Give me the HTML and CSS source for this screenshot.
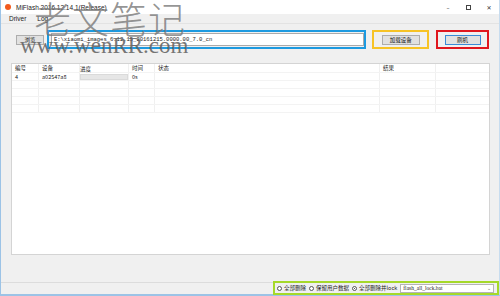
FILE: index.html
```html
<!DOCTYPE html>
<html>
<head>
<meta charset="utf-8">
<link rel="stylesheet" href="styles.css">
</head>
<body>
<div class="window">
  <div class="titlebar">
    <span class="appicon"></span>
    <span class="title">MiFlash 2016.12.14.1(Release)</span>
    <span class="controls">
      <span class="ctl">&#8211;</span>
      <span class="ctl box"></span>
      <span class="ctl">&#10005;</span>
    </span>
  </div>
  <div class="menubar">
    <span class="menu">Driver</span>
    <span class="menu">Log</span>
  </div>
  <div class="main">
    <div class="toolbar">
      <button class="btn browse">浏览</button>
      <div class="mark mark-blue">
        <div class="path">E:\xiaomi_images_6.12.15_20161215.0000.00_7.0_cn</div>
      </div>
      <div class="mark mark-yellow">
        <button class="btn load">加载设备</button>
      </div>
      <div class="mark mark-red">
        <button class="btn flash">刷机</button>
      </div>
    </div>
    <div class="table">
      <div class="row head">
        <span class="c c1">编号</span><span class="c c2">设备</span><span class="c c3">进度</span><span class="c c4">时间</span><span class="c c5">状态</span><span class="c c6">结果</span><span class="c c7"></span>
      </div>
      <div class="row">
        <span class="c c1">4</span><span class="c c2">a02547a8</span><span class="c c3"><span class="prog"></span></span><span class="c c4">0s</span><span class="c c5"></span><span class="c c6"></span><span class="c c7"></span>
      </div>
      <div class="row empty"><span class="c c1"></span><span class="c c2"></span><span class="c c3"></span><span class="c c4"></span><span class="c c5"></span><span class="c c6"></span><span class="c c7"></span></div>
      <div class="row empty"><span class="c c1"></span><span class="c c2"></span><span class="c c3"></span><span class="c c4"></span><span class="c c5"></span><span class="c c6"></span><span class="c c7"></span></div>
      <div class="row empty"><span class="c c1"></span><span class="c c2"></span><span class="c c3"></span><span class="c c4"></span><span class="c c5"></span><span class="c c6"></span><span class="c c7"></span></div>
      <div class="row empty"><span class="c c1"></span><span class="c c2"></span><span class="c c3"></span><span class="c c4"></span><span class="c c5"></span><span class="c c6"></span><span class="c c7"></span></div>
      <div class="filler"></div>
    </div>
  </div>
  <div class="statusbar">
    <div class="mark mark-green">
      <span class="radio"></span><span class="lbl">全部删除</span>
      <span class="radio"></span><span class="lbl">保留用户数据</span>
      <span class="radio on"></span><span class="lbl">全部删除并lock</span>
      <div class="select"><span>flash_all_lock.bat</span><span class="arrow">&#8964;</span></div>
    </div>
  </div>
  <div class="watermark">
    <div class="wm-cn">老文笔记</div>
    <div class="wm-en">www.wenRR.com</div>
  </div>
</div>
</body>
</html>
```

FILE: styles.css
```css
* { box-sizing: border-box; }
html, body { margin: 0; padding: 0; }
body {
  width: 500px;
  height: 296px;
  overflow: hidden;
  background: #f0f0f0;
  font-family: "Noto Sans CJK SC", "Liberation Sans", sans-serif;
  font-size: 6px;
  color: #222;
}
.window {
  position: relative;
  width: 500px;
  height: 296px;
  display: flex;
  flex-direction: column;
  border-left: 1px solid #9cc3e6;
  border-right: 1px solid #c7dcef;
  border-bottom: 2px solid #9cc3e6;
  background: #f0f0f0;
}
.titlebar {
  height: 14px;
  background: #ffffff;
  display: flex;
  align-items: center;
  padding-left: 4px;
}
.appicon {
  width: 6px;
  height: 6px;
  border-radius: 50%;
  background: #f25a1e;
  margin-right: 5px;
}
.title {
  font-family: "Liberation Sans", sans-serif;
  font-size: 6.5px;
  color: #222;
}
.controls {
  margin-left: auto;
  display: flex;
  align-items: center;
}
.ctl {
  width: 20px;
  text-align: center;
  font-size: 6px;
  color: #333;
  font-family: "DejaVu Sans", sans-serif;
}
.ctl.box {
  width: 5px;
  height: 5px;
  border: 1px solid #444;
  margin: 0 8px;
}
.menubar {
  height: 10px;
  background: #f0f0f0;
  display: flex;
  align-items: center;
  padding-left: 8px;
  border-bottom: 1px solid #e3e3e3;
}
.menu {
  font-family: "Liberation Sans", sans-serif;
  font-size: 6.5px;
  margin-right: 11px;
}
.main {
  flex: 1;
  display: flex;
  flex-direction: column;
  padding: 6px 10px 0 10px;
}
.toolbar {
  height: 19px;
  display: flex;
  align-items: center;
  padding-left: 5px;
}
.btn {
  font-family: "Noto Sans CJK SC", sans-serif;
  font-size: 5.5px;
  line-height: 8px;
  height: 10px;
  padding: 0;
  background: #e1e1e1;
  border: 1px solid #adadad;
  color: #111;
}
.browse { width: 28px; margin-right: 3px; }
.mark { display: flex; align-items: center; justify-content: center; }
.mark-blue {
  width: 321px;
  height: 19px;
  border: 2px solid #1d9ae0;
  padding-left: 2px;
  justify-content: flex-start;
}
.path {
  width: 313px;
  height: 13px;
  background: #fff;
  border: 1px solid #aaa;
  font-family: "Liberation Mono", monospace;
  font-size: 5.5px;
  line-height: 11px;
  padding-left: 2px;
  color: #222;
}
.mark-yellow {
  width: 57px;
  height: 19px;
  border: 2px solid #f7c325;
  margin-left: 6px;
}
.load { width: 38px; }
.mark-red {
  width: 53px;
  height: 19px;
  border: 2px solid #e0161e;
  margin-left: 7px;
}
.flash { width: 36px; border-color: #3a8ad6; }
.table {
  margin-top: 14px;
  width: 479px;
  height: 192px;
  background: #fff;
  border: 1px solid #d4d4d4;
  display: flex;
  flex-direction: column;
}
.row {
  display: flex;
  height: 8px;
  border-bottom: 1px solid #f3f3f3;
}
.row.head { height: 9px; }
.c {
  display: block;
  height: 100%;
  border-right: 1px solid #f0f0f0;
  padding-left: 3px;
  font-size: 5.5px;
  line-height: 8px;
  white-space: nowrap;
  font-family: "Noto Sans CJK SC", "Liberation Sans", sans-serif;
}
.c1 { width: 27px; }
.c2 { width: 41px; }
.c3 { width: 49px; padding: 1px 0 1px 0; }
.c4 { width: 26px; }
.c5 { width: 225px; }
.c6 { width: 56px; }
.c7 { flex: 1; border-right: none; }
.prog {
  display: block;
  width: 100%;
  height: 6px;
  background: #e6e6e6;
  border: 1px solid #dadada;
}
.filler {
  flex: 1;
  display: flex;
}
.statusbar {
  height: 12px;
  border-top: 1px solid #dcdcdc;
  margin-top: 27px;
  display: flex;
  justify-content: flex-end;
}
.mark-green {
  width: 226px;
  height: 14px;
  margin-top: -2px;
  border: 2px solid #a5d92a;
  justify-content: flex-start;
  padding-left: 2px;
}
.radio {
  width: 5px;
  height: 5px;
  border-radius: 50%;
  border: 1px solid #555;
  background: #fff;
  margin-right: 2px;
  position: relative;
}
.radio.on::after {
  content: "";
  position: absolute;
  left: 1px;
  top: 1px;
  width: 1px;
  height: 1px;
  border-radius: 50%;
  background: #222;
}
.lbl {
  font-size: 5.5px;
  margin-right: 3px;
  white-space: nowrap;
}
.select {
  width: 94px;
  height: 9px;
  background: #fff;
  border: 1px solid #b5b5b5;
  display: flex;
  align-items: center;
  padding-left: 2px;
  font-family: "Liberation Serif", serif;
  font-size: 5.5px;
}
.arrow { margin-left: auto; margin-right: 2px; color: #666; font-size: 5px; line-height: 5px; }
.watermark {
  position: absolute;
  left: 19px;
  top: 0px;
  pointer-events: none;
}
.wm-cn {
  font-family: "Noto Sans CJK SC", sans-serif;
  font-weight: 200;
  font-size: 37px;
  line-height: 37px;
  letter-spacing: 1px;
  margin-left: 14px;
  color: rgba(120, 120, 120, 0.8);
}
.wm-en {
  font-family: "Liberation Serif", serif;
  font-size: 23px;
  line-height: 22px;
  color: rgba(95, 95, 95, 0.85);
  margin-top: -2px;
}
```
